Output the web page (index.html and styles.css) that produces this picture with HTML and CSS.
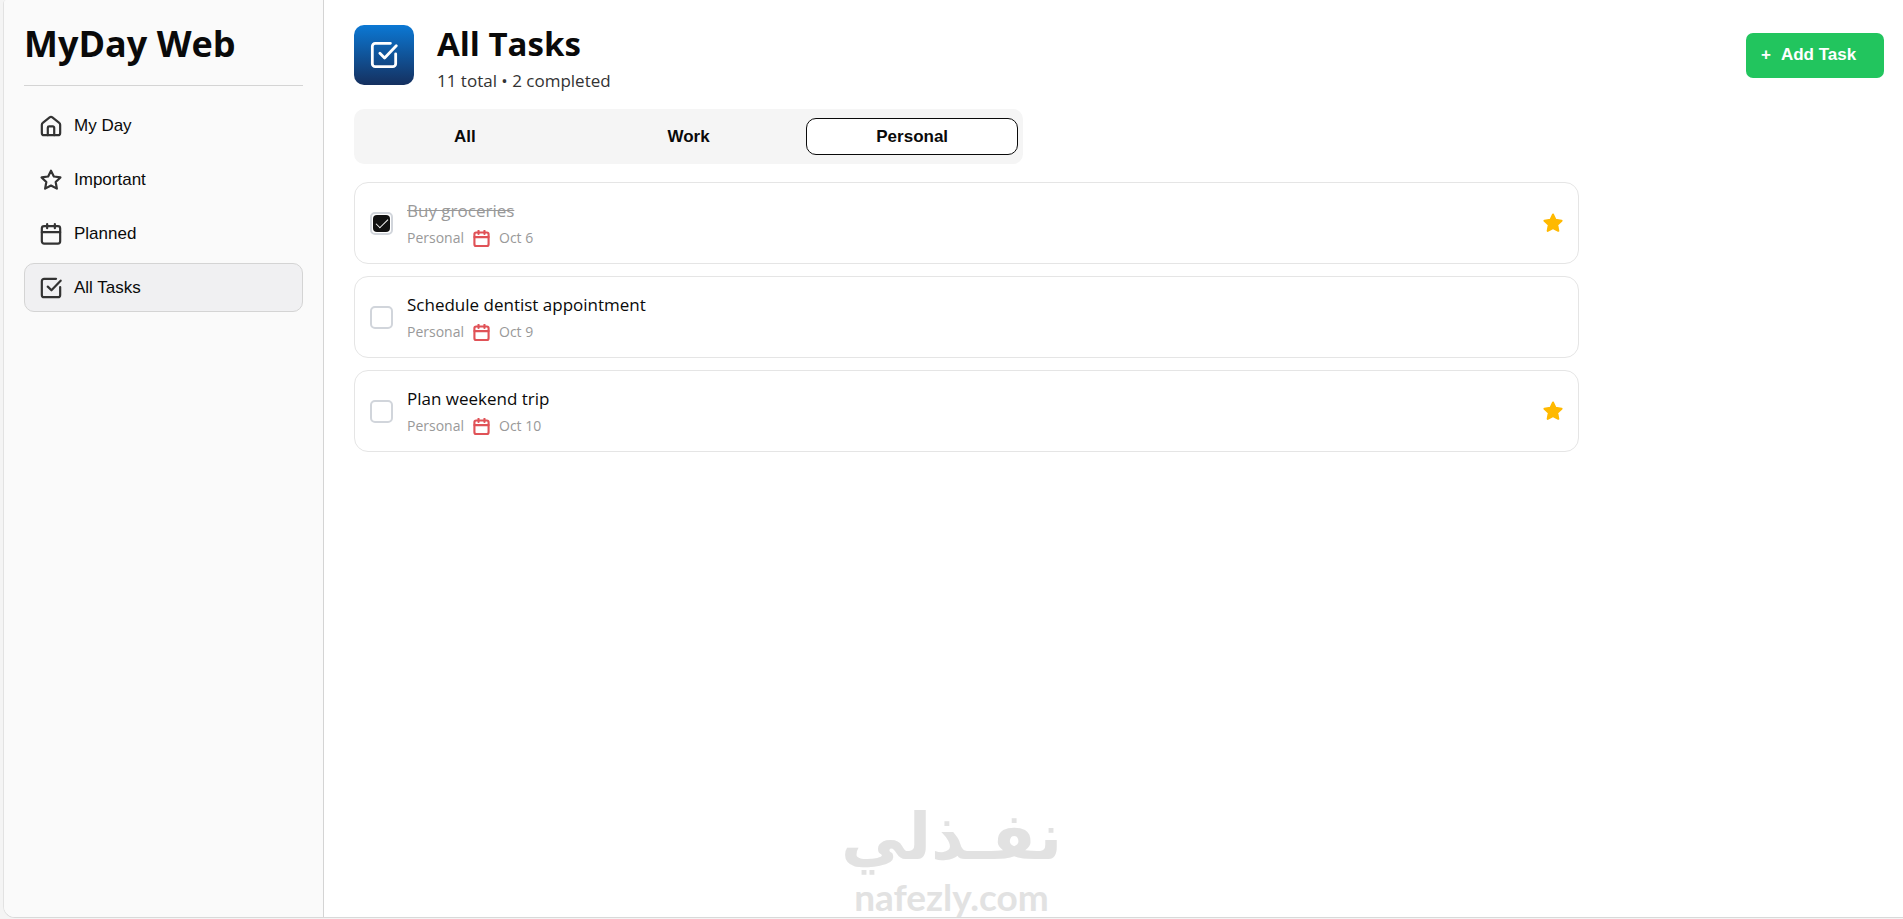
FILE: index.html
```html
<!DOCTYPE html>
<html lang="en">
  <head>
    <meta charset="UTF-8" />
    <meta name="viewport" content="width=device-width, initial-scale=1.0" />
    <title>MyDay Web</title>
    <link rel="stylesheet" href="styles.css">
  </head>
  <body>
    <!-- Shared icons -->
    <svg class="icon-defs" aria-hidden="true">
      <symbol id="icon-home" viewBox="0 0 24 24">
        <path d="M2 10.5a2.5 2.5 0 0 1 1-2l7.5-6a2.5 2.5 0 0 1 3 0l7.5 6a2.5 2.5 0 0 1 1 2v9a2.5 2.5 0 0 1-2.5 2.5h-15A2.5 2.5 0 0 1 2 19.5z" />
        <path d="M8.5 22v-8a1.5 1.5 0 0 1 1.5-1.5h4a1.5 1.5 0 0 1 1.5 1.5v8" />
      </symbol>
      <symbol id="icon-star" viewBox="0 0 24 24">
        <path d="M12 1.8l3.1 6.4 7.2 1-5.2 5 1.3 7.2L12 18l-6.4 3.4 1.3-7.2-5.2-5 7.2-1z" />
      </symbol>
      <symbol id="icon-calendar" viewBox="0 0 24 24">
        <rect x="2" y="3.5" width="20" height="19" rx="2.5" />
        <path d="M2 10h20M7.8 1.2v4.5M16.2 1.2v4.5" />
      </symbol>
      <symbol id="icon-check" viewBox="0 0 24 24">
        <path d="M17.5 2h-13A2.5 2.5 0 0 0 2 4.5v15A2.5 2.5 0 0 0 4.5 22h15a2.5 2.5 0 0 0 2.5-2.5V11" />
        <path d="M8.5 10.5l4 4L22.5 4" />
      </symbol>
    </svg>

    <div class="app">
      <aside class="sidebar">
        <h1 class="logo">MyDay Web</h1>
        <nav class="nav">
          <button class="nav-item"><svg class="icon"><use href="#icon-home" /></svg>My Day</button>
          <button class="nav-item"><svg class="icon"><use href="#icon-star" /></svg>Important</button>
          <button class="nav-item"><svg class="icon"><use href="#icon-calendar" /></svg>Planned</button>
          <button class="nav-item active"><svg class="icon"><use href="#icon-check" /></svg>All Tasks</button>
        </nav>
      </aside>

      <main class="main">
        <header class="header">
          <div class="header-icon"><svg class="icon"><use href="#icon-check" /></svg></div>
          <div class="header-text">
            <h2>All Tasks</h2>
            <p>11 total • 2 completed</p>
          </div>
          <button class="add-btn"><span class="plus">+</span><span>Add Task</span></button>
        </header>

        <div class="tabs">
          <button class="tab">All</button>
          <button class="tab">Work</button>
          <button class="tab active">Personal</button>
        </div>

        <ul class="task-list">
          <li class="task done">
            <input type="checkbox" id="task-1" checked />
            <div class="task-body">
              <label for="task-1">Buy groceries</label>
              <div class="task-meta">
                <span>Personal</span>
                <svg class="icon"><use href="#icon-calendar" /></svg>
                <span>Oct 6</span>
              </div>
            </div>
            <button class="star-btn" aria-label="Important"><svg class="icon"><use href="#icon-star" /></svg></button>
          </li>
          <li class="task">
            <input type="checkbox" id="task-2" />
            <div class="task-body">
              <label for="task-2">Schedule dentist appointment</label>
              <div class="task-meta">
                <span>Personal</span>
                <svg class="icon"><use href="#icon-calendar" /></svg>
                <span>Oct 9</span>
              </div>
            </div>
          </li>
          <li class="task">
            <input type="checkbox" id="task-3" />
            <div class="task-body">
              <label for="task-3">Plan weekend trip</label>
              <div class="task-meta">
                <span>Personal</span>
                <svg class="icon"><use href="#icon-calendar" /></svg>
                <span>Oct 10</span>
              </div>
            </div>
            <button class="star-btn" aria-label="Important"><svg class="icon"><use href="#icon-star" /></svg></button>
          </li>
        </ul>
      </main>
    </div>

    <div class="watermark">
      <span class="watermark-ar" lang="ar" dir="rtl">نفـذلي</span>
      <span class="watermark-en">nafezly.com</span>
    </div>
  </body>
</html>
```
FILE: styles.css
```css
* {
  box-sizing: border-box;
}
body {
  margin: 0;
  padding: 0 0 1px 3px;
  background: #f4f4f4;
  color: #0a0a0a;
  font-family: 'Open Sans', 'Noto Sans', sans-serif;
}
button {
  font-family: 'Liberation Sans', Arial, sans-serif;
  font-size: 17px;
  color: #0a0a0a;
  border: none;
  background: none;
  cursor: pointer;
}
.icon-defs {
  display: none;
}
.icon {
  width: 22px;
  height: 22px;
  flex: none;
  fill: none;
  stroke: #333;
  stroke-width: 2.4;
  stroke-linecap: round;
  stroke-linejoin: round;
}

.app {
  display: flex;
  min-height: calc(100vh - 1px);
  background: #fff;
  border-left: 1px solid #e2e2e2;
  border-bottom: 1px solid #d9d9d9;
  border-radius: 4px 0 0 12px;
  overflow: hidden;
}

/* Sidebar */
.sidebar {
  width: 320px;
  flex: none;
  padding: 20px;
  background: #fafafa;
  border-right: 1px solid #d4d4d4;
}
.logo {
  margin: 0 0 15px;
  padding-bottom: 17px;
  border-bottom: 1px solid #d4d4d4;
  font-size: 36px;
  line-height: 48px;
}
.nav {
  display: flex;
  flex-direction: column;
  gap: 5px;
}
.nav-item {
  display: flex;
  align-items: center;
  gap: 12px;
  height: 49px;
  padding: 0 15px;
  border: 1px solid transparent;
  border-radius: 10px;
}
.nav-item.active {
  background: #f0f0f2;
  border-color: #d4d4d4;
}

/* Main */
.main {
  flex: 1;
  padding: 18px 19px 20px 30px;
}
.header {
  display: flex;
  align-items: center;
  margin-bottom: 17px;
}
.header-icon {
  display: flex;
  align-items: center;
  justify-content: center;
  width: 60px;
  height: 60px;
  margin-right: 23px;
  border-radius: 10px;
  background: linear-gradient(#0b78d4, #15305f);
}
.header-icon .icon {
  width: 28px;
  height: 28px;
  stroke: #fff;
}
.header-text h2 {
  margin: 0;
  font-size: 33px;
  line-height: 52px;
}
.header-text p {
  margin: 0;
  font-size: 17px;
  line-height: 22px;
  color: #333;
}
.add-btn {
  display: flex;
  gap: 10px;
  width: 138px;
  height: 45px;
  margin-left: auto;
  padding: 12px 15px;
  border-radius: 7px;
  background: #22c55e;
  color: #fff;
  font-weight: bold;
}
.tabs {
  display: flex;
  gap: 12px;
  max-width: 669px;
  height: 55px;
  margin-bottom: 18px;
  padding: 9px 5px;
  border-radius: 10px;
  background: #f5f5f5;
}
.tab {
  flex: 1;
  border: 1px solid transparent;
  border-radius: 10px;
  font-weight: bold;
}
.tab.active {
  background: #fff;
  border-color: #0a0a0a;
}

/* Tasks */
.task-list {
  display: flex;
  flex-direction: column;
  gap: 12px;
  max-width: 1225px;
  margin: 0;
  padding: 0;
  list-style: none;
}
.task {
  display: flex;
  align-items: center;
  height: 82px;
  padding: 0 15px;
  border: 1px solid #e5e5e5;
  border-radius: 14px;
}
.task input {
  display: grid;
  place-items: center;
  appearance: none;
  width: 23px;
  height: 23px;
  margin: 0 14px 0 0;
  border: 2px solid #d1d5db;
  border-radius: 5px;
}
.task input::before,
.task input::after {
  grid-area: 1 / 1;
}
.task input:checked::before {
  content: '';
  width: 17px;
  height: 17px;
  border-radius: 4px;
  background: #111;
}
.task input:checked::after {
  content: '';
  width: 11px;
  height: 5px;
  margin-bottom: 3px;
  border-left: 1px solid #fff;
  border-bottom: 1px solid #fff;
  transform: rotate(-45deg);
}
.task-body {
  flex: 1;
  padding-top: 2px;
}
.task label {
  display: block;
  font-size: 17px;
  line-height: 28px;
}
.task.done label {
  color: #999;
  text-decoration: line-through;
}
.task-meta {
  display: flex;
  align-items: center;
  gap: 9px;
  font-size: 14px;
  line-height: 26px;
  color: #999;
}
.task-meta .icon {
  width: 17px;
  height: 17px;
  stroke: #e05257;
  stroke-width: 3;
}
.star-btn {
  display: flex;
  padding: 0;
}
.star-btn .icon {
  width: 20px;
  height: 20px;
  fill: #ffb900;
  stroke: #ffb900;
}

.watermark {
  position: absolute;
  left: 50%;
  bottom: 0;
  display: flex;
  flex-direction: column;
  align-items: center;
  transform: translateX(-50%);
  color: #e2e2e2;
  font-weight: bold;
}
.watermark-ar {
  font-family: 'DejaVu Sans', sans-serif;
  font-size: 65px;
  line-height: 76px;
}
.watermark-en {
  font-family: Lato, sans-serif;
  font-size: 37px;
  line-height: 44px;
}
```
